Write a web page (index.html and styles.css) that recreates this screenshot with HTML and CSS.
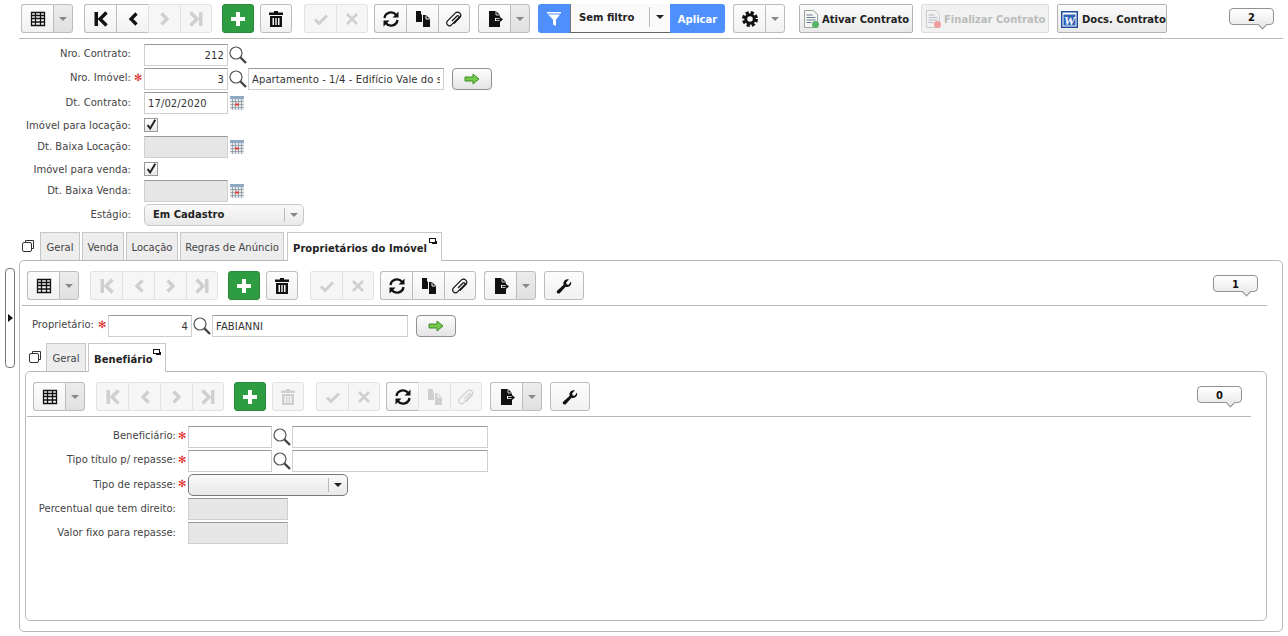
FILE: index.html
```html
<!DOCTYPE html>
<html lang="pt-BR">
<head>
  <meta charset="UTF-8" />
  <title>Contrato</title>
  <link rel="stylesheet" href="styles.css">
</head>
<body>

  <!-- icon sprites -->
  <svg class="sprites" aria-hidden="true">
    <symbol id="i-grid" viewBox="0 0 16 16"><path d="M1.500 1.500h13v13h-13zM1.500 4.500h13M1.500 7.500h13M1.500 11h13M5.500 1.500v13M10.500 1.500v13" fill="none" stroke="currentColor" stroke-width="1.300"/></symbol>
    <symbol id="i-first" viewBox="0 0 16 16"><path d="M1.500 1h3.500v14H1.500z" fill="currentColor"/><path d="M13.500 1.500 7 8l6.500 6.500" fill="none" stroke="currentColor" stroke-width="3.400"/></symbol>
    <symbol id="i-prev" viewBox="0 0 16 16"><path d="M11.500 2.500 6 8l5.500 5.500" fill="none" stroke="currentColor" stroke-width="3.200"/></symbol>
    <symbol id="i-next" viewBox="0 0 16 16"><path d="M4.500 2.500 10 8l-5.500 5.500" fill="none" stroke="currentColor" stroke-width="3.200"/></symbol>
    <symbol id="i-last" viewBox="0 0 16 16"><path d="M11 1h3.500v14H11z" fill="currentColor"/><path d="M2.500 1.500 9 8l-6.500 6.500" fill="none" stroke="currentColor" stroke-width="3.400"/></symbol>
    <symbol id="i-plus" viewBox="0 0 16 16"><path d="M6 1h4v5h5v4h-5v5H6v-5H1V6h5z" fill="currentColor"/></symbol>
    <symbol id="i-trash" viewBox="0 0 16 16"><path d="M6 0h4v1.500h5V4H1V1.500h5zM2 5h12v11H2zM4.500 7v7H6V7zM7.300 7v7h1.400V7zM10 7v7h1.500V7z" fill="currentColor" fill-rule="evenodd"/></symbol>
    <symbol id="i-check" viewBox="0 0 16 16"><path d="m2 8.500 4 4 8-8" fill="none" stroke="currentColor" stroke-width="3"/></symbol>
    <symbol id="i-x" viewBox="0 0 16 16"><path d="m3 3 10 10M13 3 3 13" fill="none" stroke="currentColor" stroke-width="2.500"/></symbol>
    <symbol id="i-refresh" viewBox="0 0 16 16"><path d="M1.500 7A6.500 6.500 0 0 1 13 3.800M14.500 9A6.500 6.500 0 0 1 3 12.200" fill="none" stroke="currentColor" stroke-width="2.300"/><path d="M15.500 .5V6.500H9.500zM.5 15.500V9.500h6z" fill="currentColor"/></symbol>
    <symbol id="i-copy" viewBox="0 0 16 16"><path d="M1 0h5v3l1 1v7H1z" fill="currentColor"/><path d="M8 4h3l4 4v8H8z" fill="currentColor"/><path d="M11 4.500V8h3.500" fill="none" stroke="#fff"/></symbol>
    <symbol id="i-clip" viewBox="0 0 16 16"><path d="M6 10 11 5a1.200 1.200 0 0 1 1.700 1.700L5.500 13.900a2.800 2.800 0 0 1-4-4L9.500 1.900a3.200 3.200 0 0 1 4.500 4.500L8 12.500" fill="none" stroke="currentColor" stroke-width="1.200"/></symbol>
    <symbol id="i-export" viewBox="0 0 16 16"><path d="M2 0h7l4 4v3H8v3h5v6H2z" fill="currentColor"/><path d="M9 8.500h5M12 6l3 2.500-3 2.500" fill="none" stroke="currentColor" stroke-width="1.300"/><path d="M9 0v4h4" fill="none" stroke="#fff" stroke-width=".8"/></symbol>
    <symbol id="i-funnel" viewBox="0 0 16 16"><path d="M1 1h14v1.500H1zM2 3.500h12L10 8.500V15l-3-1.500v-5z" fill="currentColor"/></symbol>
    <symbol id="i-gear" viewBox="0 0 16 16"><circle cx="8" cy="8" r="4.300" fill="none" stroke="currentColor" stroke-width="3"/><circle cx="8" cy="8" r="6.500" fill="none" stroke="currentColor" stroke-width="3" stroke-dasharray="3.100 2"/></symbol>
    <symbol id="i-wrench" viewBox="0 0 16 16"><path d="M15 3.500c.6 2-.1 4-2 5-1.200.6-2.400.6-3.400.2L4 15c-.8.800-2 .800-2.700.1-.8-.8-.7-2 .1-2.700l6.300-5.600c-.4-1-.4-2.200.2-3.300 1-1.800 3-2.600 5-2l-2.700 2.700.4 2.200 2.100.4z" fill="currentColor"/></symbol>
    <symbol id="i-lens" viewBox="0 0 18 18"><circle cx="7" cy="7" r="6" fill="#fff" stroke="#555" stroke-width="1.200"/><path d="m11.500 11.500 5.500 5.500" stroke="#444" stroke-width="2.400"/></symbol>
    <symbol id="i-cal" viewBox="0 0 14 14"><path d="M0 0h14v14H0z" fill="#e6eaee"/><path d="M0 0h14v3H0z" fill="#8fa9c4"/><path d="M.5 5.500h13M.5 8.500h13M.5 11.500h13M2.500 3v11M5.500 3v11M8.500 3v11M11.500 3v11" stroke="#8d979f" stroke-width=".8"/><path d="M5 7.500h4v2H5z" fill="#e8412f"/></symbol>
    <symbol id="i-go" viewBox="0 0 16 12"><path d="M1 4h8V1l6 5-6 5V8H1z" fill="#74c94b" stroke="#3f8f2c"/></symbol>
    <symbol id="i-doc" viewBox="0 0 16 18"><path d="M1.500.5h9l4 4v13h-13z" fill="#f4f4f0" stroke="#9aa39a"/><path d="M3.500 5h6M3.500 7.500h9M3.500 10h9M3.500 12.500h5" stroke="#6b7f99"/></symbol>
    <symbol id="i-tabs" viewBox="0 0 12 12"><path d="M3.500 2.500V.5h8v8h-2" fill="none" stroke="#333"/><rect x=".5" y="2.500" width="9" height="9" rx="1.500" fill="#fff" stroke="#333"/></symbol>
  </svg>

  <div class="page">
    <div class="side-handle"><span class="side-caret"></span></div>

    <div class="toolbar">
      <div class="btn-group">
        <button class="btn"><svg class="ic"><use href="#i-grid"/></svg></button>
        <button class="btn btn-caret"><span class="caret"></span></button>
      </div>
      <div class="btn-group gap-11">
        <button class="btn"><svg class="ic"><use href="#i-first"/></svg></button>
        <button class="btn"><svg class="ic"><use href="#i-prev"/></svg></button>
        <button class="btn off"><svg class="ic"><use href="#i-next"/></svg></button>
        <button class="btn off"><svg class="ic"><use href="#i-last"/></svg></button>
      </div>
      <button class="btn btn-add gap-10"><svg class="ic"><use href="#i-plus"/></svg></button>
      <button class="btn btn-solo gap-6"><svg class="ic"><use href="#i-trash"/></svg></button>
      <div class="btn-group gap-12">
        <button class="btn off"><svg class="ic"><use href="#i-check"/></svg></button>
        <button class="btn off"><svg class="ic"><use href="#i-x"/></svg></button>
      </div>
      <div class="btn-group gap-6">
        <button class="btn"><svg class="ic"><use href="#i-refresh"/></svg></button>
        <button class="btn"><svg class="ic"><use href="#i-copy"/></svg></button>
        <button class="btn"><svg class="ic"><use href="#i-clip"/></svg></button>
      </div>
      <div class="btn-group gap-8">
        <button class="btn"><svg class="ic"><use href="#i-export"/></svg></button>
        <button class="btn btn-caret"><span class="caret"></span></button>
      </div>
      <div class="filter gap-8">
        <button class="filter-icon"><svg class="ic"><use href="#i-funnel"/></svg></button>
        <div class="filter-box">
          <span class="filter-name">Sem filtro</span>
          <span class="filter-arrow"><span class="caret caret-dark"></span></span>
        </div>
        <button class="filter-apply">Aplicar</button>
      </div>
      <div class="btn-group gap-8">
        <button class="btn"><svg class="ic"><use href="#i-gear"/></svg></button>
        <button class="btn btn-caret btn-caret-light"><span class="caret"></span></button>
      </div>
      <button class="btn-text btn-ativar gap-14"><svg class="ic-doc"><use href="#i-doc"/></svg><span class="badge-ok"></span>Ativar Contrato</button>
      <button class="btn-text btn-finalizar off gap-8"><svg class="ic-doc"><use href="#i-doc"/></svg><span class="badge-no"></span>Finalizar Contrato</button>
      <button class="btn-text btn-docs gap-8">
        <svg class="ic-word" viewBox="0 0 17 17"><rect width="17" height="17" fill="#1f4e9e"/><rect x="1.500" y="1.500" width="14" height="14" fill="#fff"/><rect x="2.500" y="3.500" width="12" height="11" fill="#2f63b8"/><text x="8.500" y="13.500" class="word-w">W</text></svg>
        Docs. Contrato
      </button>
      <span class="counter counter-top">2</span>
    </div>

    <div class="form form-main">
      <div class="row">
        <label class="lbl">Nro. Contrato:</label><span class="req"></span>
        <input class="inp inp-code num" value="212" readonly><svg class="lens"><use href="#i-lens"/></svg>
      </div>
      <div class="row">
        <label class="lbl">Nro. Imóvel:</label><span class="req">✻</span>
        <input class="inp inp-code num" value="3" readonly><svg class="lens"><use href="#i-lens"/></svg>
        <input class="inp inp-desc" value="Apartamento - 1/4 - Edifício Vale do sol" readonly>
        <button class="btn-go"><svg class="go"><use href="#i-go"/></svg></button>
      </div>
      <div class="row row-low">
        <label class="lbl">Dt. Contrato:</label><span class="req"></span>
        <input class="inp inp-code" value="17/02/2020" readonly><svg class="cal"><use href="#i-cal"/></svg>
      </div>
      <div class="row row-check">
        <label class="lbl">Imóvel para locação:</label><span class="req"></span>
        <span class="checkbox"><svg viewBox="0 0 14 14"><path d="m3 7 3 4 6-10" fill="none" stroke="#222" stroke-width="2.300"/></svg></span>
      </div>
      <div class="row row-low">
        <label class="lbl">Dt. Baixa Locação:</label><span class="req"></span>
        <input class="inp inp-code inp-off" readonly><svg class="cal"><use href="#i-cal"/></svg>
      </div>
      <div class="row row-check">
        <label class="lbl">Imóvel para venda:</label><span class="req"></span>
        <span class="checkbox"><svg viewBox="0 0 14 14"><path d="m3 7 3 4 6-10" fill="none" stroke="#222" stroke-width="2.300"/></svg></span>
      </div>
      <div class="row row-low">
        <label class="lbl">Dt. Baixa Venda:</label><span class="req"></span>
        <input class="inp inp-code inp-off" readonly><svg class="cal"><use href="#i-cal"/></svg>
      </div>
      <div class="row row-low">
        <label class="lbl">Estágio:</label><span class="req"></span>
        <div class="select select-stage">
          <span class="select-text">Em Cadastro</span>
          <span class="select-arrow"><span class="caret"></span></span>
        </div>
      </div>
    </div>

    <div class="tabs">
      <svg class="tabs-copy"><use href="#i-tabs"/></svg>
      <span class="tab tab-geral">Geral</span>
      <span class="tab tab-venda">Venda</span>
      <span class="tab tab-locacao">Locação</span>
      <span class="tab tab-regras">Regras de Anúncio</span>
      <span class="tab tab-on tab-owner">Proprietários do Imóvel<span class="detach"></span></span>
    </div>

    <div class="panel panel-outer">
      <div class="toolbar toolbar-sub">
        <div class="btn-group">
          <button class="btn"><svg class="ic"><use href="#i-grid"/></svg></button>
          <button class="btn btn-caret"><span class="caret"></span></button>
        </div>
        <div class="btn-group gap-11">
          <button class="btn off"><svg class="ic"><use href="#i-first"/></svg></button>
          <button class="btn off"><svg class="ic"><use href="#i-prev"/></svg></button>
          <button class="btn off"><svg class="ic"><use href="#i-next"/></svg></button>
          <button class="btn off"><svg class="ic"><use href="#i-last"/></svg></button>
        </div>
        <button class="btn btn-add gap-10"><svg class="ic"><use href="#i-plus"/></svg></button>
        <button class="btn btn-solo gap-6"><svg class="ic"><use href="#i-trash"/></svg></button>
        <div class="btn-group gap-12">
          <button class="btn off"><svg class="ic"><use href="#i-check"/></svg></button>
          <button class="btn off"><svg class="ic"><use href="#i-x"/></svg></button>
        </div>
        <div class="btn-group gap-6">
          <button class="btn"><svg class="ic"><use href="#i-refresh"/></svg></button>
          <button class="btn"><svg class="ic"><use href="#i-copy"/></svg></button>
          <button class="btn"><svg class="ic"><use href="#i-clip"/></svg></button>
        </div>
        <div class="btn-group gap-8">
          <button class="btn"><svg class="ic"><use href="#i-export"/></svg></button>
          <button class="btn btn-caret"><span class="caret"></span></button>
        </div>
        <button class="btn btn-solo btn-tool gap-8"><svg class="ic"><use href="#i-wrench"/></svg></button>
        <span class="counter">1</span>
      </div>

      <div class="form form-owner">
        <div class="row">
          <label class="lbl">Proprietário:</label><span class="req">✻</span>
          <input class="inp inp-code num" value="4" readonly><svg class="lens"><use href="#i-lens"/></svg>
          <input class="inp inp-desc" value="FABIANNI" readonly>
          <button class="btn-go"><svg class="go"><use href="#i-go"/></svg></button>
        </div>
      </div>

      <div class="tabs tabs-sub">
        <svg class="tabs-copy"><use href="#i-tabs"/></svg>
        <span class="tab tab-geral">Geral</span>
        <span class="tab tab-on tab-benef">Benefiário<span class="detach"></span></span>
      </div>

      <div class="panel panel-inner">
        <div class="toolbar toolbar-sub toolbar-inner">
          <div class="btn-group">
            <button class="btn"><svg class="ic"><use href="#i-grid"/></svg></button>
            <button class="btn btn-caret"><span class="caret"></span></button>
          </div>
          <div class="btn-group gap-11">
            <button class="btn off"><svg class="ic"><use href="#i-first"/></svg></button>
            <button class="btn off"><svg class="ic"><use href="#i-prev"/></svg></button>
            <button class="btn off"><svg class="ic"><use href="#i-next"/></svg></button>
            <button class="btn off"><svg class="ic"><use href="#i-last"/></svg></button>
          </div>
          <button class="btn btn-add gap-10"><svg class="ic"><use href="#i-plus"/></svg></button>
          <button class="btn btn-solo off gap-6"><svg class="ic"><use href="#i-trash"/></svg></button>
          <div class="btn-group gap-12">
            <button class="btn off"><svg class="ic"><use href="#i-check"/></svg></button>
            <button class="btn off"><svg class="ic"><use href="#i-x"/></svg></button>
          </div>
          <div class="btn-group gap-6">
            <button class="btn"><svg class="ic"><use href="#i-refresh"/></svg></button>
            <button class="btn off"><svg class="ic"><use href="#i-copy"/></svg></button>
            <button class="btn off"><svg class="ic"><use href="#i-clip"/></svg></button>
          </div>
          <div class="btn-group gap-8">
            <button class="btn"><svg class="ic"><use href="#i-export"/></svg></button>
            <button class="btn btn-caret"><span class="caret"></span></button>
          </div>
          <button class="btn btn-solo btn-tool gap-8"><svg class="ic"><use href="#i-wrench"/></svg></button>
          <span class="counter">0</span>
        </div>

        <div class="form form-benef">
          <div class="row">
            <label class="lbl">Beneficiário:</label><span class="req">✻</span>
            <input class="inp inp-code" readonly><svg class="lens"><use href="#i-lens"/></svg>
            <input class="inp inp-desc" readonly>
          </div>
          <div class="row">
            <label class="lbl">Tipo título p/ repasse:</label><span class="req">✻</span>
            <input class="inp inp-code" readonly><svg class="lens"><use href="#i-lens"/></svg>
            <input class="inp inp-desc" readonly>
          </div>
          <div class="row row-low">
            <label class="lbl">Tipo de repasse:</label><span class="req">✻</span>
            <div class="select select-live">
              <span class="select-text"></span>
              <span class="select-arrow"><span class="caret caret-dark"></span></span>
            </div>
          </div>
          <div class="row row-low">
            <label class="lbl">Percentual que tem direito:</label><span class="req"></span>
            <input class="inp inp-wide inp-off" readonly>
          </div>
          <div class="row row-low">
            <label class="lbl">Valor fixo para repasse:</label><span class="req"></span>
            <input class="inp inp-wide inp-off" readonly>
          </div>
        </div>
      </div>
    </div>
  </div>

</body>
</html>
```

FILE: styles.css
```css
* {
  box-sizing: border-box;
}

html, body {
  margin: 0;
  height: 100%;
  background: #fff;
  overflow: hidden;
  font-family: "DejaVu Sans", Verdana, sans-serif;
  font-size: 10px;
  color: #444;
}

.sprites {
  display: none;
}

.page {
  position: relative;
  width: 1288px;
  padding: 4px 5px 0 19px;
}

/* Toolbars */
.toolbar {
  display: flex;
  align-items: flex-start;
  padding: 0 0 5px 2px;
  border-bottom: 1px solid #b4baba;
}

.toolbar-sub {
  padding-left: 5px;
}

.toolbar-inner {
  padding-left: 6px;
}

.btn-group {
  display: flex;
}

.gap-6 { margin-left: 6px; }
.gap-8 { margin-left: 8px; }
.gap-10 { margin-left: 10px; }
.gap-11 { margin-left: 11px; }
.gap-12 { margin-left: 12px; }
.gap-14 { margin-left: 14px; }

.btn {
  display: flex;
  align-items: center;
  justify-content: center;
  width: 32px;
  height: 29px;
  padding: 0;
  border: 1px solid #b9bdbd;
  border-right-width: 0;
  background: linear-gradient(#fdfdfd, #f1f1f1);
  color: #111;
}

.btn-group .btn:first-child {
  border-radius: 3px 0 0 3px;
}

.btn-group .btn:last-child {
  border-right-width: 1px;
  border-radius: 0 3px 3px 0;
}

.btn.off {
  background: #f6f6f6;
  border-color: #e2e2e2;
  color: #cfcfcf;
}

.btn-caret {
  width: 20px;
  background: linear-gradient(#ececec, #e0e0e0);
}

.btn-caret-light {
  background: linear-gradient(#fdfdfd, #f1f1f1);
}

.btn-solo {
  border-right-width: 1px;
  border-radius: 3px;
}

.btn-tool {
  width: 40px;
}

.btn-add {
  border: 1px solid #2a8a3a;
  border-radius: 3px;
  background: #2e9c41;
  color: #fff;
}

.ic {
  width: 16px;
  height: 16px;
}

.caret {
  width: 0;
  height: 0;
  border-left: 4px solid transparent;
  border-right: 4px solid transparent;
  border-top: 4px solid #888;
}

.caret-dark {
  border-top-color: #222;
}

/* Filter control */
.filter {
  display: flex;
  height: 29px;
}

.filter-icon {
  width: 32px;
  padding: 0;
  border: 0;
  border-radius: 3px 0 0 3px;
  background: #4f8ffb;
  color: #fff;
  display: flex;
  align-items: center;
  justify-content: center;
}

.filter-box {
  display: flex;
  align-items: center;
  justify-content: space-between;
  width: 100px;
  padding: 0 0 2px 8px;
  border-bottom: 1px solid #666;
  border-left: 1px solid #777;
  background: #fafafa;
}

.filter-name {
  font-weight: bold;
  color: #222;
}

.filter-arrow {
  display: flex;
  align-items: center;
  justify-content: center;
  width: 21px;
  height: 20px;
  border-left: 1px solid #bbb;
}

.filter-apply {
  width: 55px;
  padding: 1px 0 0;
  border: 0;
  border-radius: 0 3px 3px 0;
  background: #4f8ffb;
  color: #fff;
  font: bold 10px "DejaVu Sans", Verdana, sans-serif;
}

/* Buttons with a caption */
.btn-text {
  position: relative;
  display: flex;
  align-items: center;
  height: 29px;
  padding: 1px 0 0 3px;
  border: 1px solid #b0b4b4;
  border-radius: 2px;
  background: linear-gradient(#fbfbfb, #e9e9e9);
  color: #222;
  font: bold 10px "DejaVu Sans", Verdana, sans-serif;
  white-space: nowrap;
}

.btn-ativar { width: 114px; }
.btn-finalizar { width: 128px; }
.btn-docs { width: 110px; }

.btn-text.off {
  border-color: #dcdcdc;
  background: #f1f1f1;
  color: #b9bdb9;
}

.btn-text.off .ic-doc {
  opacity: 0.45;
}

.ic-doc {
  width: 16px;
  height: 18px;
  margin-right: 3px;
}

.badge-ok,
.badge-no {
  position: absolute;
  left: 12px;
  top: 16px;
  width: 7px;
  height: 7px;
  border-radius: 50%;
  background: #58b36a;
}

.badge-no {
  background: #ee9c9c;
}

.ic-word {
  width: 17px;
  height: 17px;
  margin-right: 4px;
}

.word-w {
  fill: #fff;
  font: italic bold 13px "Liberation Serif", serif;
  text-anchor: middle;
}

.counter {
  position: relative;
  width: 45px;
  height: 17px;
  margin: 4px 9px 0 auto;
  border: 1px solid #8d9191;
  border-radius: 4px;
  background: linear-gradient(#fff, #ececec);
  color: #111;
  font-weight: bold;
  line-height: 17px;
  text-align: center;
}

.counter::after {
  content: "";
  position: absolute;
  right: 7px;
  bottom: -4px;
  width: 6px;
  height: 6px;
  border-right: 1px solid #8d9191;
  border-bottom: 1px solid #8d9191;
  background: #ececec;
  transform: rotate(45deg);
}

/* Forms */
.form {
  display: flex;
  flex-direction: column;
  gap: 2px;
}

.form-main {
  margin-top: 5px;
}

.form-owner {
  margin-top: 9px;
}

.form-benef {
  margin-top: 9px;
}

.row {
  display: flex;
  align-items: center;
  min-height: 22px;
}

.row-check {
  min-height: 18px;
}

.lbl {
  flex: none;
  padding-bottom: 3px;
  text-align: right;
  white-space: nowrap;
  color: #444;
  letter-spacing: 0.03px;
}

.row-low .lbl {
  padding-bottom: 1px;
}

.row-check .lbl {
  padding-bottom: 0;
}

.form-main .lbl { width: 112px; }
.form-owner .lbl { width: 72px; }
.form-benef .lbl { width: 149px; }

.req {
  flex: none;
  width: 13px;
  padding: 0 0 3px 3px;
  color: #e02020;
  font-size: 10px;
  line-height: 14px;
}

.form-owner .req { width: 14px; padding-left: 4px; }
.form-benef .req { width: 12px; padding-left: 2px; }

.inp {
  flex: none;
  height: 22px;
  padding: 0 3px;
  border: 1px solid #cfcfcf;
  border-top-color: #9a9a9a;
  outline: none;
  background: #fff;
  color: #333;
  font: 10px "DejaVu Sans", Verdana, sans-serif;
  letter-spacing: 0.1px;
}

.inp-code { width: 84px; }
.inp-desc { width: 196px; }
.inp-wide { width: 100px; }

.num {
  text-align: right;
}

.inp-off {
  background: #e6e6e6;
}

.lens {
  flex: none;
  width: 18px;
  height: 18px;
  margin: 0 1px 0 1px;
}

.cal {
  flex: none;
  width: 14px;
  height: 14px;
  margin-left: 2px;
}

.btn-go {
  display: flex;
  align-items: center;
  justify-content: center;
  flex: none;
  width: 40px;
  height: 22px;
  margin-left: 8px;
  padding: 0;
  border: 1px solid #8d9191;
  border-radius: 4px;
  background: linear-gradient(#fdfdfd, #e4e4e4);
}

.go {
  width: 16px;
  height: 12px;
}

.checkbox {
  display: block;
  width: 14px;
  height: 14px;
  border: 1px solid #999;
  background: linear-gradient(#fff, #e8e8e8);
}

.checkbox svg {
  display: block;
  width: 12px;
  height: 12px;
}

.select {
  display: flex;
  align-items: center;
  height: 22px;
  border: 1px solid #c8c8c8;
  border-radius: 5px;
  background: linear-gradient(#fafafa, #e9e9e9);
}

.select-stage { width: 160px; }

.select-live {
  width: 160px;
  border-color: #777;
}

.select-text {
  flex: 1;
  padding: 0 0 2px 8px;
  color: #222;
  font-weight: bold;
}

.select-arrow {
  display: flex;
  align-items: center;
  justify-content: center;
  width: 19px;
  height: 14px;
  border-left: 1px solid #bbb;
}

/* Tabs and panels */
.tabs {
  display: flex;
  align-items: flex-start;
  gap: 2px;
  height: 29px;
  margin: 6px 0 -1px;
  padding-left: 3px;
  position: relative;
}

.tabs-sub {
  margin-left: 0;
  padding-left: 7px;
}

.tabs-copy {
  flex: none;
  width: 12px;
  height: 12px;
  margin: 8px 4px 0 0;
}

.tabs-sub .tabs-copy {
  margin-right: 3px;
}

.tab {
  height: 28px;
  border: 1px solid #c4c8c8;
  border-bottom: 0;
  background: #ededed;
  color: #444;
  line-height: 29px;
  text-align: center;
  white-space: nowrap;
}

.tab-geral { width: 40px; }
.tab-venda { width: 42px; }
.tab-locacao { width: 52px; }
.tab-regras { width: 104px; }

.tab-on {
  position: relative;
  z-index: 1;
  height: 29px;
  padding-left: 5px;
  background: #fff;
  color: #222;
  font-weight: bold;
  line-height: 31px;
  letter-spacing: 0.05px;
  text-align: left;
}

.tab-owner {
  width: 155px;
  margin-left: 1px;
}

.tab-benef {
  width: 78px;
}

.detach {
  position: absolute;
  top: 5px;
  right: 5px;
  width: 7px;
  height: 5px;
  border: 1px solid #111;
  box-shadow: 2px 2px 0 -1px #111;
}

.panel {
  border: 1px solid #b4baba;
  border-radius: 5px;
}

.panel-outer {
  height: 372px;
  padding: 10px 15px 0 2px;
}

.panel-inner {
  height: 250px;
  margin-left: 3px;
  padding: 10px 15px 0 1px;
}

.side-handle {
  position: absolute;
  left: 5px;
  top: 268px;
  display: flex;
  align-items: center;
  width: 10px;
  height: 100px;
  border: 1px solid #777;
  border-radius: 4px;
  background: #fff;
}

.side-caret {
  margin-left: 2px;
  border-top: 4px solid transparent;
  border-bottom: 4px solid transparent;
  border-left: 5px solid #111;
}
```
